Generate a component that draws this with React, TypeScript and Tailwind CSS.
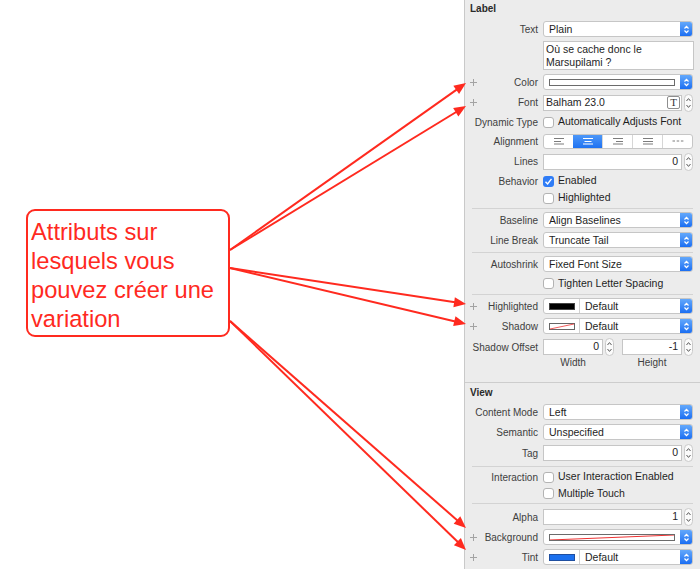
import React from "react";
import clsx from "clsx";

const RED = "#ff2a1f";

function UpDownWhite() {
  return (
    <svg width="7" height="11" viewBox="0 0 7 11">
      <path d="M1.5 4.5 L3.5 2.3 L5.5 4.5" fill="none" stroke="#fff" strokeWidth="1.2" />
      <path d="M1.5 6.5 L3.5 8.7 L5.5 6.5" fill="none" stroke="#fff" strokeWidth="1.2" />
    </svg>
  );
}

function Stepper() {
  return (
    <svg width="9" height="18" viewBox="0 0 9 18" className="shrink-0">
      <rect x="0.5" y="0.5" width="8" height="17" rx="4" fill="#fbfbfb" stroke="#cacaca" />
      <path d="M2.5 7 L4.5 4.6 L6.5 7" fill="none" stroke="#5a5a5a" strokeWidth="1" />
      <path d="M2.5 11 L4.5 13.4 L6.5 11" fill="none" stroke="#5a5a5a" strokeWidth="1" />
    </svg>
  );
}

function Plus() {
  return (
    <svg width="7" height="7" viewBox="0 0 7 7" className="ml-[5px] shrink-0">
      <path d="M3.5 0 V7 M0 3.5 H7" stroke="#a3a3a3" strokeWidth="1" />
    </svg>
  );
}

function Row({ label, plus, cls, children }: { label?: string; plus?: boolean; cls: string; children?: React.ReactNode }) {
  return (
    <div className={clsx("flex items-center", cls)}>
      <div className="flex w-[73px] shrink-0 items-center">
        {plus && <Plus />}
        <span className="ml-auto whitespace-nowrap text-[10px] text-[#404040]">{label}</span>
      </div>
      <div className="ml-[5px] mr-[7px] flex flex-1 items-center">{children}</div>
    </div>
  );
}

function BlueArrows() {
  return (
    <div className="flex w-[12px] shrink-0 items-center justify-center rounded-r-[2px] bg-linear-to-b from-[#63a8fb] to-[#1a6ef2]">
      <UpDownWhite />
    </div>
  );
}

function Popup({ value, swatch }: { value: string; swatch?: React.ReactNode }) {
  return (
    <div className="flex h-[16px] w-full items-stretch rounded-[3px] border border-[#c6c6c6] bg-white">
      {swatch && (
        <div className="flex w-[36px] shrink-0 items-center justify-center border-r border-[#d2d2d2]">{swatch}</div>
      )}
      <span className="flex-1 pl-[5px] text-[10.5px] leading-[14px] text-[#1e1e1e]">{value}</span>
      <BlueArrows />
    </div>
  );
}

function ColorWell({ clear }: { clear?: boolean }) {
  return (
    <div className="flex h-[16px] w-full items-stretch rounded-[3px] border border-[#c6c6c6] bg-white">
      <div className="flex flex-1 items-center px-[5px]">
        <div className="relative h-[7px] w-full border border-[#6b6b6b] bg-white">
          {clear && (
            <svg className="absolute inset-0 h-full w-full" preserveAspectRatio="none" viewBox="0 0 100 10">
              <line x1="0" y1="10" x2="100" y2="0" stroke="#e33" strokeWidth="1" vectorEffect="non-scaling-stroke" />
            </svg>
          )}
        </div>
      </div>
      <BlueArrows />
    </div>
  );
}

function Field({ value, align = "right", children }: { value: string; align?: "left" | "right"; children?: React.ReactNode }) {
  return (
    <div className="flex flex-1 items-center">
      <div
        className={clsx(
          "flex h-[16px] flex-1 items-center border border-[#c6c6c6] bg-white text-[10.5px] text-[#1e1e1e]",
          align === "right" ? "justify-end pr-[3px]" : "pl-[2px]"
        )}
      >
        <span className="flex-1 whitespace-nowrap" style={{ textAlign: align }}>{value}</span>
        {children}
      </div>
      <div className="ml-[2px]">
        <Stepper />
      </div>
    </div>
  );
}

function Check({ label, checked }: { label: string; checked?: boolean }) {
  return (
    <div className="flex items-center gap-[4px]">
      {checked ? (
        <div className="flex h-[11px] w-[11px] items-center justify-center rounded-[3px] bg-[#2f7cf6]">
          <svg width="9" height="9" viewBox="0 0 9 9">
            <path d="M1.5 4.8 L3.6 7 L7.5 1.8" fill="none" stroke="#fff" strokeWidth="1.4" />
          </svg>
        </div>
      ) : (
        <div className="h-[11px] w-[11px] rounded-[3px] border border-[#b3b3b3] bg-white" />
      )}
      <span className="whitespace-nowrap text-[10.5px] text-[#1e1e1e]">{label}</span>
    </div>
  );
}

function AlignIcon({ kind, on }: { kind: "left" | "center" | "right" | "justify"; on?: boolean }) {
  const c = on ? "#ffffff" : "#7c7c7c";
  const mid = kind === "left" ? "M1 4.5 H8" : kind === "center" ? "M2.5 4.5 H9.5" : kind === "right" ? "M4 4.5 H11" : "M1 4.5 H11";
  return (
    <svg width="12" height="8" viewBox="0 0 12 8">
      <path d={`M1 1.5 H11 ${mid} M1 7 H11`} stroke={c} strokeWidth="1.2" />
    </svg>
  );
}

function Segmented() {
  const seg = "flex flex-1 items-center justify-center";
  return (
    <div className="flex h-[15px] w-full overflow-hidden rounded-[3px] border border-[#c6c6c6] bg-white">
      <div className={seg}><AlignIcon kind="left" /></div>
      <div className={clsx(seg, "bg-linear-to-b from-[#4c97f8] to-[#1e72f2]")}><AlignIcon kind="center" on /></div>
      <div className={clsx(seg, "border-l border-[#d6d6d6]")}><AlignIcon kind="right" /></div>
      <div className={clsx(seg, "border-l border-[#d6d6d6]")}><AlignIcon kind="justify" /></div>
      <div className={clsx(seg, "border-l border-[#d6d6d6]")}>
        <svg width="12" height="4" viewBox="0 0 12 4">
          <path d="M0.5 2 H3 M4.7 2 H7.2 M8.9 2 H11.4" stroke="#7c7c7c" strokeWidth="1" />
        </svg>
      </div>
    </div>
  );
}

function Sep({ cls }: { cls: string }) {
  return <div className={clsx("mx-[7px] h-px bg-[#d3d3d3]", cls)} />;
}

function Arrow({ x1, y1, x2, y2 }: { x1: number; y1: number; x2: number; y2: number }) {
  const dx = x2 - x1;
  const dy = y2 - y1;
  const l = Math.hypot(dx, dy);
  const ux = dx / l;
  const uy = dy / l;
  const len = 12;
  const hw = 5;
  const bx = x2 - ux * len;
  const by = y2 - uy * len;
  const pts = `${x2},${y2} ${bx - uy * hw},${by + ux * hw} ${bx + uy * hw},${by - ux * hw}`;
  return (
    <g>
      <line x1={x1} y1={y1} x2={bx + ux} y2={by + uy} stroke={RED} strokeWidth="2" />
      <polygon points={pts} fill={RED} />
    </g>
  );
}

export default function App() {
  return (
    <div className="relative flex h-[569px] w-[700px] overflow-hidden bg-white font-['Liberation_Sans',Arial,sans-serif]">
      {/* callout */}
      <div className="w-[464px] shrink-0">
        <div className="ml-[26px] mt-[209px] h-[128px] w-[204px] rounded-[9px] border-2 border-[#ff2a1f] pl-[3px] pt-[7px]">
          <p className="text-[23.7px] leading-[29px] text-[#ff2a1f]">
            Attributs sur
            <br />
            lesquels vous
            <br />
            pouvez créer une
            <br />
            variation
          </p>
        </div>
      </div>

      {/* inspector */}
      <div className="flex w-[236px] flex-col border-l border-[#c9c9c9] bg-[#ececec]">
        <div className="flex h-[16px] items-center pl-[5px] text-[10px] font-bold text-[#2a2a2a]">Label</div>

        <Row label="Text" cls="mt-[3px] h-[20px]"><Popup value="Plain" /></Row>
        <div className="ml-[78px] mr-[6px] mt-[2px] h-[29px] border border-[#c6c6c6] bg-white px-[2px] pt-[1px] text-[10.5px] leading-[13px] text-[#1e1e1e]">
          Où se cache donc le
          <br />
          Marsupilami ?
        </div>
        <Row label="Color" plus cls="mt-[2px] h-[20px]"><ColorWell /></Row>
        <Row label="Font" plus cls="h-[21px]">
          <Field value="Balham 23.0" align="left">
            <span className="mr-px flex h-[13px] w-[13px] shrink-0 items-center justify-center rounded-[2px] border border-[#8e8e8e] font-['Liberation_Serif',serif] text-[11px] leading-none text-[#333]">
              T
            </span>
          </Field>
        </Row>
        <Row label="Dynamic Type" cls="h-[18px]"><Check label="Automatically Adjusts Font" /></Row>
        <Row label="Alignment" cls="h-[20px]"><Segmented /></Row>
        <Row label="Lines" cls="h-[21px]"><Field value="0" /></Row>
        <Row label="Behavior" cls="h-[18px]"><Check label="Enabled" checked /></Row>
        <Row cls="h-[16px]"><Check label="Highlighted" /></Row>
        <Sep cls="mt-[2px]" />
        <Row label="Baseline" cls="mt-[1px] h-[20px]"><Popup value="Align Baselines" /></Row>
        <Row label="Line Break" cls="h-[20px]"><Popup value="Truncate Tail" /></Row>
        <Sep cls="mt-[2px]" />
        <Row label="Autoshrink" cls="mt-[1px] h-[20px]"><Popup value="Fixed Font Size" /></Row>
        <Row cls="h-[19px]"><Check label="Tighten Letter Spacing" /></Row>
        <Sep cls="mt-[1px]" />
        <Row label="Highlighted" plus cls="mt-[1px] h-[20px]">
          <Popup value="Default" swatch={<div className="h-[7px] w-[26px] border border-[#444] bg-black" />} />
        </Row>
        <Row label="Shadow" plus cls="h-[20px]">
          <Popup
            value="Default"
            swatch={
              <svg width="26" height="7" viewBox="0 0 26 7">
                <rect x="0.5" y="0.5" width="25" height="6" fill="#fff" stroke="#666" />
                <line x1="1" y1="6" x2="25" y2="1" stroke="#e33" strokeWidth="0.8" />
              </svg>
            }
          />
        </Row>
        <Row label="Shadow Offset" cls="mt-[2px] h-[18px]">
          <div className="flex w-[71px]"><Field value="0" /></div>
          <div className="ml-[8px] flex flex-1"><Field value="-1" /></div>
        </Row>
        <Row cls="h-[12px]">
          <span className="w-[60px] text-center text-[10px] text-[#404040]">Width</span>
          <span className="ml-[19px] w-[60px] text-center text-[10px] text-[#404040]">Height</span>
        </Row>

        <div className="mt-[14px] h-px bg-[#cdcdcd]" />
        <div className="flex h-[18px] items-center pl-[5px] text-[10px] font-bold text-[#2a2a2a]">View</div>
        <Row label="Content Mode" cls="mt-[1px] h-[20px]"><Popup value="Left" /></Row>
        <Row label="Semantic" cls="h-[20px]"><Popup value="Unspecified" /></Row>
        <Row label="Tag" cls="mt-[1px] h-[20px]"><Field value="0" /></Row>
        <Sep cls="mt-[3px]" />
        <Row label="Interaction" cls="mt-[1px] h-[18px]"><Check label="User Interaction Enabled" /></Row>
        <Row cls="h-[15px]"><Check label="Multiple Touch" /></Row>
        <Sep cls="mt-[2px]" />
        <Row label="Alpha" cls="mt-[3px] h-[20px]"><Field value="1" /></Row>
        <Row label="Background" plus cls="h-[20px]"><ColorWell clear /></Row>
        <Row label="Tint" plus cls="h-[20px]">
          <Popup value="Default" swatch={<div className="h-[7px] w-[26px] border border-[#1f4fa0] bg-[#1b70ee]" />} />
        </Row>
      </div>

      {/* arrows over everything */}
      <svg className="pointer-events-none absolute inset-0" width="700" height="569" viewBox="0 0 700 569">
        <Arrow x1={230} y1={250} x2={466} y2={83} />
        <Arrow x1={230} y1={250} x2={466} y2={106} />
        <Arrow x1={230} y1={268} x2={466} y2={304} />
        <Arrow x1={230} y1={268} x2={466} y2={324} />
        <Arrow x1={230} y1={321} x2={466} y2={528} />
        <Arrow x1={230} y1={321} x2={466} y2={550} />
      </svg>
    </div>
  );
}
